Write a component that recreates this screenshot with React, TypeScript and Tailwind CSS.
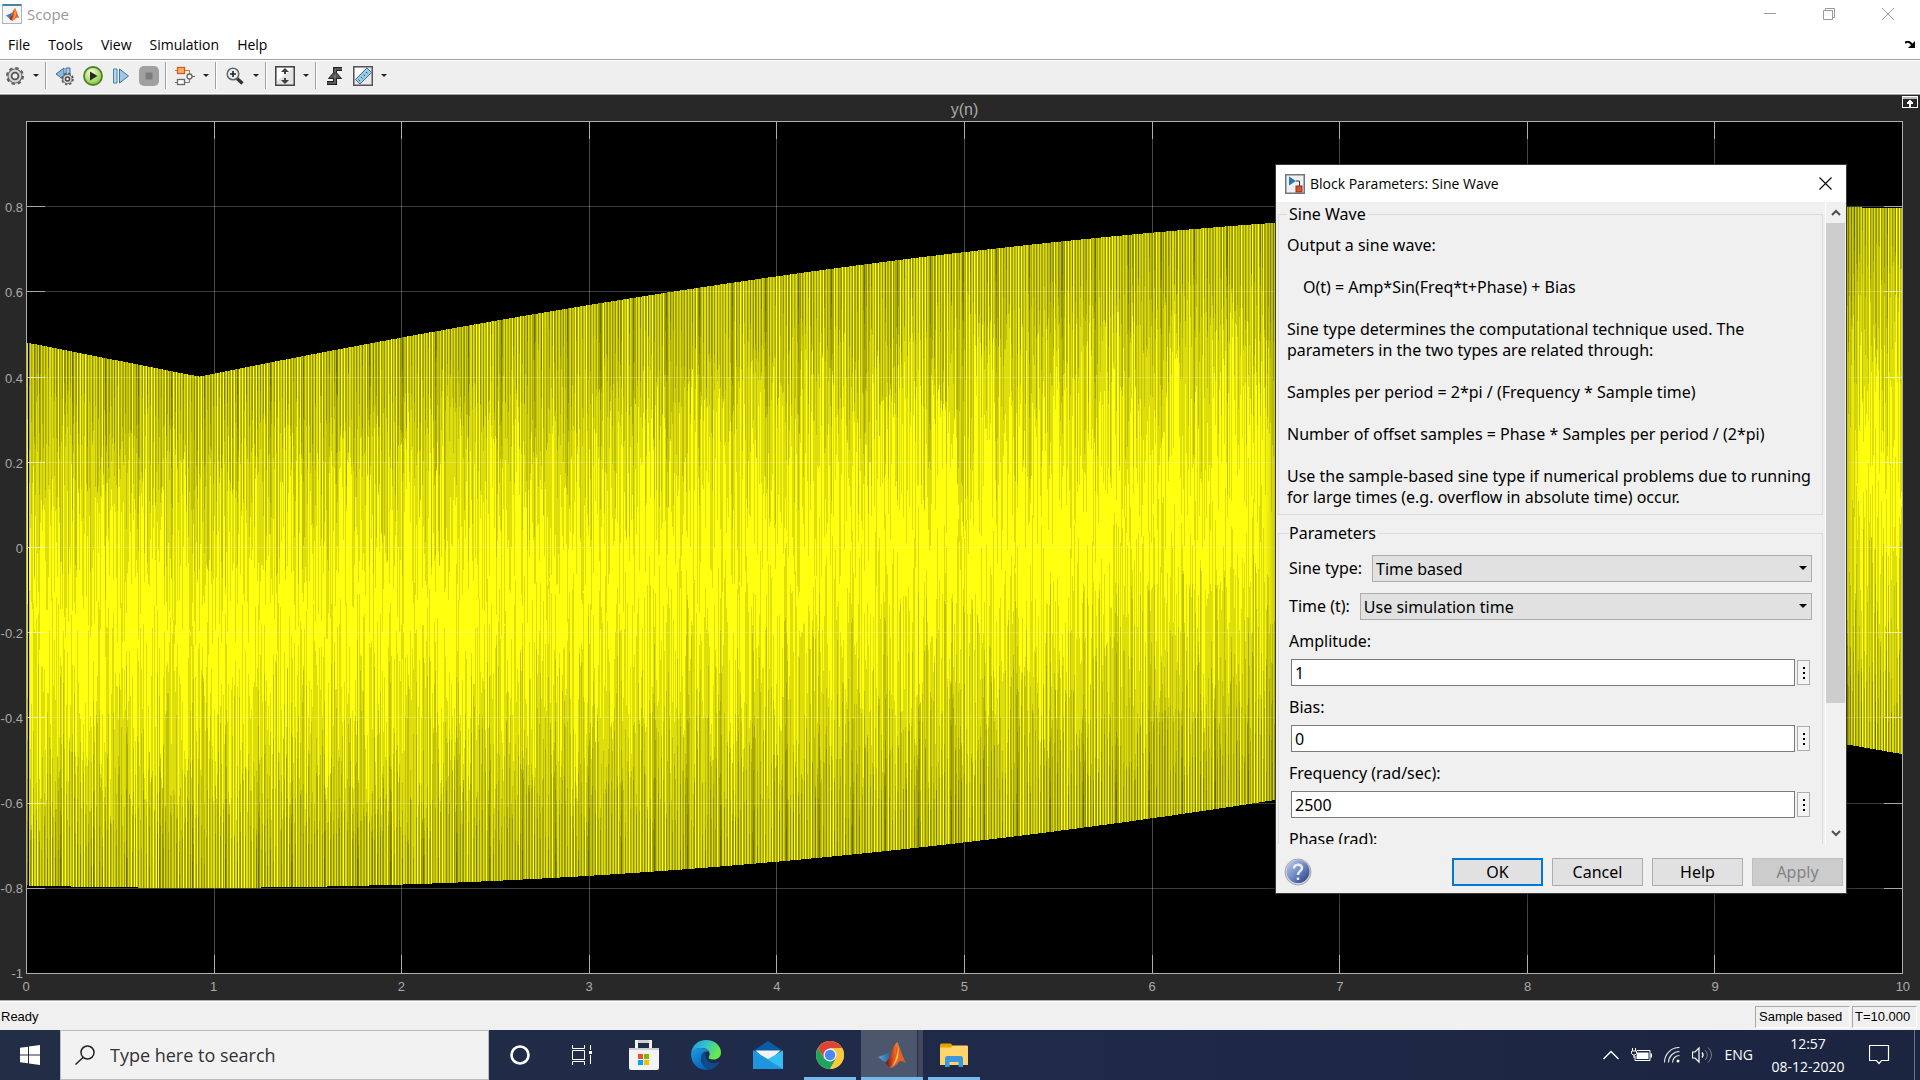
import type { ReactNode } from "react";

/* ---------- signal ---------- */

const PLOT_W = 1876;
const PLOT_H = 852;

const toY = (v: number) => Math.round(PLOT_H / 2 - v * (PLOT_H / 2));

const upperAt = (t: number) =>
  t < 0.92 ? 0.48 - (0.08 * t) / 0.92 : 0.8 * Math.sin(0.5236 + 0.128 * (t - 0.92));

const lowerAt = (t: number) =>
  t < 9.1 ? -0.8 * Math.cos(0.128 * (t - 0.92)) : -0.417 - 0.077 * (t - 9.1);

function makeRandom(seed: number) {
  let s = seed;
  return () => {
    s = (s * 1664525 + 1013904223) % 4294967296;
    return s / 4294967296;
  };
}

const REACH = [1, 0.78, 0.52, 0.34, 0.2, 0.1];

function buildSignal() {
  const rand = makeRandom(2500);
  const top: string[] = [];
  const bottom: string[] = [];
  const shades = ["", "", "", "", "", ""];
  for (let x = 1; x < PLOT_W; x++) {
    const t = (x / PLOT_W) * 10;
    const u = toY(upperAt(t));
    const l = toY(lowerAt(t));
    top.push(`${x},${u}`, `${x + 1},${u}`);
    bottom.unshift(`${x + 1},${l}`, `${x},${l}`);
    const half = (l - u) / 2;
    for (const side of [0, 1]) {
      const beat = Math.cos(2 * Math.PI * (x * 0.3633 + side * 0.4));
      const strong = x % 33 === (side ? 1 : 13);
      const count = strong ? 6 : Math.max(0, Math.min(5, Math.round(2.3 + 1.9 * beat + (rand() - 0.5) * 1.6)));
      for (let j = 0; j < count; j++) {
        const reach = REACH[j] * (strong ? 0.8 + rand() * 0.4 : 0.25 + rand() * 0.85);
        const depth = Math.round(half * reach);
        shades[j] += side ? `M${x} ${l}v${-depth}h1v${depth}z` : `M${x} ${u}v${depth}h1v${-depth}z`;
      }
    }
  }
  return { outline: [...top, ...bottom].join(" "), shades };
}

const signal = buildSignal();
const ticks = [1, 2, 3, 4, 5, 6, 7, 8, 9];
const xLabels = ["0", "1", "2", "3", "4", "5", "6", "7", "8", "9", "10"];
const yLabels = ["", "0.8", "0.6", "0.4", "0.2", "0", "-0.2", "-0.4", "-0.6", "-0.8", "-1"];

function Plot() {
  const gx = (i: number) => Math.round((PLOT_W * i) / 10);
  const gy = (i: number) => Math.round((PLOT_H * i) / 10);
  return (
    <svg
      className="block h-full w-full"
      viewBox={`1 1 ${PLOT_W - 1} ${PLOT_H - 1}`}
      preserveAspectRatio="none"
      shapeRendering="crispEdges"
      role="img"
      aria-label="y(n)"
    >
      <rect width={PLOT_W} height={PLOT_H} fill="#000" />
      {ticks.map((i) => (
        <path key={i} d={`M${gx(i)} 0h1v${PLOT_H}h-1z`} fill="#484848" />
      ))}
      <polygon points={signal.outline} fill="#ffff10" />
      {signal.shades.map((d, i) => (
        <path key={i} d={d} fill="#000" fillOpacity={0.13} />
      ))}
      <rect x="2" y="222" width="1" height="542" fill="#000" />
      {ticks.map((i) => (
        <g key={i} fill="#fff">
          <path d={`M0 ${gy(i)}h${PLOT_W}v1H0z`} fillOpacity={0.24} />
          <path d={`M0 ${gy(i)}h19v1H0z`} fillOpacity={0.55} />
          <path d={`M${PLOT_W} ${gy(i)}h-18v1h18z`} fillOpacity={0.55} />
          <path d={`M${gx(i)} 0h1v18h-1z`} fill="#afafaf" />
          <path d={`M${gx(i)} ${PLOT_H}h1v-18h-1z`} fill="#afafaf" />
        </g>
      ))}
    </svg>
  );
}

function ScopeArea() {
  return (
    <section className="relative flex min-h-0 flex-1 flex-col bg-[#282828] pr-[17px] font-['Liberation_Sans',Arial,sans-serif] text-[13px] text-[#aaaaaa]">
      <h1 className="h-[26px] pt-[5px] pl-[26px] text-center text-base leading-5">y(n)</h1>
      <button aria-label="Maximize axes" className="absolute top-px right-[2px]">
        <svg width="16" height="12" viewBox="0 0 16 12" shapeRendering="crispEdges">
          <path d="M.5.5h15v11H.5z" fill="#282828" stroke="#fff" />
          <path d="M1 1h14v2H1z" fill="#bbb" />
          <path d="M7 4h2v1h1v1h1v2H9v3H7V8H5V6h1V5h1z" fill="#fff" />
        </svg>
      </button>
      <div className="flex min-h-0 flex-1">
        <div className="flex w-[26px] flex-col justify-between pt-0.5 pr-[3px]">
          {yLabels.map((l, i) => (
            <span key={i} className="flex h-0 items-center justify-end">
              {l}
            </span>
          ))}
        </div>
        <div className="min-h-0 min-w-0 flex-1 border border-[#afafaf]">
          <Plot />
        </div>
      </div>
      <div className="flex h-[26px] justify-between pt-[3px] pl-[26px] leading-5">
        {xLabels.map((l) => (
          <span key={l} className="flex w-0 justify-center">
            {l}
          </span>
        ))}
      </div>
    </section>
  );
}

/* ---------- logos and icons ---------- */

function MatlabMark({ size }: { size: number }) {
  return (
    <svg width={size} height={size} viewBox="0 0 30 30">
      <defs>
        <linearGradient id="mlBlue" x1="0" y1="0" x2="1" y2="0">
          <stop offset="0" stopColor="#5ea7dd" />
          <stop offset="1" stopColor="#1f5d94" />
        </linearGradient>
        <linearGradient id="mlRed" x1="0" y1="0" x2="1" y2="0">
          <stop offset="0" stopColor="#5b0f0f" />
          <stop offset=".55" stopColor="#d3421c" />
          <stop offset="1" stopColor="#ee8a2a" />
        </linearGradient>
      </defs>
      <path d="M1 17l8-3c2-.5 4-2 5.500-4l-3 10-3 2.500z" fill="url(#mlBlue)" />
      <path d="M8.500 22.500c3-2 4-5 5.500-9C16 8 18 3 20.500 2c-1 6-1 13-3.500 19-2 3-3 5-5 6z" fill="url(#mlRed)" />
      <path d="M20.500 2c2.500 5 4.500 14 8.500 21-3-2-5-3-7-1-3 3-5 6-9.500 6 5-6 7-14 8-26z" fill="#e2622a" />
      <path d="M20.500 2c1 6 0 15-5 24 3-2 4-5 5.500-8 1-6 .6-12-.5-16z" fill="#ffc04a" />
    </svg>
  );
}

function FramedMatlab() {
  return (
    <span className="flex size-5 items-center justify-center rounded-[1px] border border-t-2 border-[#a9b6bf] border-t-[#4584a8] bg-[#f4f5f6]">
      <MatlabMark size={15} />
    </span>
  );
}

function Gear({ size = 20 }: { size?: number }) {
  return (
    <svg width={size} height={size} viewBox="0 0 20 20">
      <circle cx="10" cy="10" r="7.800" fill="none" stroke="#5f5f5f" strokeWidth="2.400" strokeDasharray="3.400 2.730" />
      <circle cx="10" cy="10" r="7" fill="#d6d6d6" stroke="#6b6b6b" strokeWidth="1.200" />
      <circle cx="10" cy="10" r="3.400" fill="#efefef" stroke="#555" strokeWidth="1.800" />
    </svg>
  );
}

const toolIcons = {
  stepBack: (
    <svg width="20" height="20" viewBox="0 0 20 20">
      <path d="M1 8l8-6v12z" fill="#8fb9dc" stroke="#3d6f9c" />
      <path d="M11 2h4v10h-4z" fill="#a8c9e4" stroke="#3d6f9c" />
      <circle cx="12.500" cy="13" r="5.500" fill="none" stroke="#555" strokeWidth="1.600" strokeDasharray="2.400 1.920" />
      <circle cx="12.500" cy="13" r="4.600" fill="#ddd" stroke="#666" />
      <circle cx="12.500" cy="13" r="2" fill="#fff" stroke="#444" strokeWidth="1.500" />
    </svg>
  ),
  run: (
    <svg width="20" height="20" viewBox="0 0 20 20">
      <defs>
        <radialGradient id="runFill" cx=".4" cy=".3" r=".8">
          <stop offset="0" stopColor="#f3fbd8" />
          <stop offset="1" stopColor="#7cc032" />
        </radialGradient>
      </defs>
      <circle cx="10" cy="10" r="9" fill="url(#runFill)" stroke="#4c8422" strokeWidth="1.800" />
      <path d="M7 5.500l7.500 4.500L7 14.500z" fill="#262c1e" />
    </svg>
  ),
  stepForward: (
    <svg width="18" height="18" viewBox="0 0 18 18">
      <path d="M1.500 2h3.500v14H1.500z" fill="#b8d4ea" stroke="#4a7eac" />
      <path d="M7.500 2l9 7-9 7z" fill="#9fc6e6" stroke="#3d74a6" />
    </svg>
  ),
  stop: (
    <svg width="20" height="20" viewBox="0 0 20 20">
      <rect width="20" height="20" rx="5" fill="#a0a0a0" />
      <rect x="6.500" y="6.500" width="7" height="7" fill="#7c7c7c" />
    </svg>
  ),
  blocks: (
    <svg width="20" height="20" viewBox="0 0 20 20">
      <path d="M0 4.500h14.500V8M0 16.500h14.500V13" fill="none" stroke="#777" />
      <path d="M0 4.500h14.500V8" fill="none" stroke="#d9772b" />
      <rect x="2.500" y="1.500" width="7" height="6" fill="#f9b26a" stroke="#cf5f1b" strokeWidth="1.300" />
      <rect x="2.500" y="13.500" width="7" height="5" fill="#fff" stroke="#666" strokeWidth="1.300" />
      <path d="M17 10.500h3" stroke="#666" />
      <circle cx="14.500" cy="10.500" r="2.500" fill="#fff" stroke="#666" strokeWidth="1.300" />
    </svg>
  ),
  zoom: (
    <svg width="20" height="20" viewBox="0 0 20 20">
      <path d="M11.500 12l6 5.500" stroke="#333" strokeWidth="3.400" />
      <circle cx="8" cy="8" r="5.800" fill="#e4eef4" stroke="#666" strokeWidth="1.500" />
      <path d="M5 8h6M8 5v6" stroke="#222" strokeWidth="1.600" />
    </svg>
  ),
  fit: (
    <svg width="20" height="20" viewBox="0 0 20 20">
      <rect x=".75" y=".75" width="18.500" height="18.500" fill="#e3e3e3" stroke="#444" strokeWidth="1.500" />
      <path d="M2 2h16L2 15z" fill="#fff" />
      <path d="M10 2l4 4h-3v2H9V6H6zM10 18l4-4h-3v-2H9v2H6z" fill="#3c3c3c" />
    </svg>
  ),
  trigger: (
    <svg width="18" height="20" viewBox="0 0 18 20">
      <path d="M1 17h8V3h7" fill="none" stroke="#222" strokeWidth="4" />
      <path d="M9 5l6.500 7.500h-13z" fill="#555" stroke="#222" />
      <path d="M1.500 17h7.500V9M9 6V3h7" fill="none" stroke="#888" strokeWidth="1.200" />
    </svg>
  ),
  ruler: (
    <svg width="20" height="20" viewBox="0 0 20 20">
      <rect x=".75" y=".75" width="18.500" height="18.500" fill="#e9e9e9" stroke="#555" strokeWidth="1.500" />
      <path d="M2 2h10L2 12z" fill="#fff" />
      <path d="M2.500 13.500L14 2l4.500 4.500L7 18z" fill="#9cc9e4" stroke="#3f7391" />
      <path d="M7 15l-1.500-1.500M9.500 12.500L8 11M12 10l-1.500-1.500M14.500 7.500L13 6" stroke="#2d5b78" />
    </svg>
  ),
};

function ToolButton({ label, children }: { label: string; children: ReactNode }) {
  return (
    <button aria-label={label} className="flex h-7 w-7 items-center justify-center">
      {children}
    </button>
  );
}

function CaretButton({ label }: { label: string }) {
  return (
    <button aria-label={label} className="flex h-7 w-3.5 items-center justify-center">
      <svg width="6" height="3" viewBox="0 0 6 3">
        <path d="M0 0h6L3 3z" fill="#222" />
      </svg>
    </button>
  );
}

function Separator() {
  return <span className="mr-1 ml-0.5 h-[27px] w-0.5 border-r border-l border-r-white border-l-[#a0a0a0]" />;
}

function Toolbar() {
  return (
    <div className="flex h-9 shrink-0 items-center border-t border-b border-[#a0a0a0] bg-[#efefef] pb-[3px] shadow-[inset_0_1px_0_#fff,inset_0_-1px_0_#fff]" role="toolbar">
      <div className="flex items-center pl-px">
        <ToolButton label="Configuration properties">
          <Gear />
        </ToolButton>
        <CaretButton label="Configuration menu" />
      </div>
      <Separator />
      <ToolButton label="Step back">{toolIcons.stepBack}</ToolButton>
      <ToolButton label="Run">{toolIcons.run}</ToolButton>
      <ToolButton label="Step forward">{toolIcons.stepForward}</ToolButton>
      <ToolButton label="Stop">{toolIcons.stop}</ToolButton>
      <Separator />
      <ToolButton label="Highlight block">{toolIcons.blocks}</ToolButton>
      <CaretButton label="Highlight menu" />
      <Separator />
      <ToolButton label="Zoom">{toolIcons.zoom}</ToolButton>
      <CaretButton label="Zoom menu" />
      <Separator />
      <ToolButton label="Scale axes">{toolIcons.fit}</ToolButton>
      <CaretButton label="Scale menu" />
      <Separator />
      <ToolButton label="Triggers">{toolIcons.trigger}</ToolButton>
      <ToolButton label="Measurements">{toolIcons.ruler}</ToolButton>
      <CaretButton label="Measurements menu" />
    </div>
  );
}

/* ---------- window chrome ---------- */

function TitleBar() {
  return (
    <header className="flex h-[30px] shrink-0 items-center justify-between bg-white pb-0.5 pl-0.5 font-['Open_Sans',sans-serif]">
      <div className="flex items-center gap-[5px]">
        <FramedMatlab />
        <span className="text-[15px] text-[#999999]">Scope</span>
      </div>
      <div className="flex pr-[3px] text-[#999999]">
        <button aria-label="Minimize" className="flex h-7 w-[59px] items-center justify-center">
          <svg width="12" height="12" viewBox="0 0 12 12"><path d="M0 5.500h12" stroke="currentColor" /></svg>
        </button>
        <button aria-label="Restore" className="flex h-7 w-[59px] items-center justify-center">
          <svg width="12" height="12" viewBox="0 0 12 12" fill="none" stroke="currentColor"><path d="M.5 2.500h9v9h-9zM2.500 2.500v-2h9v9h-2" /></svg>
        </button>
        <button aria-label="Close" className="flex h-7 w-[59px] items-center justify-center">
          <svg width="12" height="12" viewBox="0 0 12 12"><path d="M0 0l12 12M12 0L0 12" stroke="currentColor" /></svg>
        </button>
      </div>
    </header>
  );
}

function MenuBar() {
  return (
    <nav className="flex h-[29px] shrink-0 items-center justify-between bg-white pr-1 pl-2 font-['Open_Sans',sans-serif] text-sm text-black">
      <div className="flex gap-[18px]">
        {["File", "Tools", "View", "Simulation", "Help"].map((m) => (
          <button key={m}>{m}</button>
        ))}
      </div>
      <button aria-label="Dock">
        <svg width="11" height="8" viewBox="0 0 11 8">
          <path d="M0 2C2 0 4 0 7 3.500" fill="none" stroke="#000" strokeWidth="2" />
          <path d="M10 0v7H3z" fill="#000" />
        </svg>
      </button>
    </nav>
  );
}

function StatusBar() {
  return (
    <footer className="flex h-[30px] shrink-0 items-center justify-between border-t border-[#adadad] bg-[#f0f0f0] pr-[3px] pl-px font-['Liberation_Sans',Arial,sans-serif] text-[13px] text-black shadow-[inset_0_1px_0_#fff]">
      <span className="pt-0.5">Ready</span>
      <div className="flex gap-0.5 pt-[3px] leading-5">
        <span className="w-[95px] border border-white border-t-[#a8a8a8] border-l-[#a8a8a8] pl-[3px]">Sample based</span>
        <span className="w-[65px] border border-white border-t-[#a8a8a8] border-l-[#a8a8a8] pl-[2px]">T=10.000</span>
      </div>
    </footer>
  );
}

/* ---------- dialog ---------- */

function SelectRow({ id, label, value }: { id: string; label: string; value: string }) {
  return (
    <div className="flex items-center gap-[10px]">
      <label htmlFor={id}>{label}</label>
      <div className="relative flex-1">
        <select id={id} className="block h-[27px] w-full appearance-none border border-[#adadad] bg-[#e1e1e1] pl-[3px] leading-5">
          <option>{value}</option>
        </select>
        <svg className="pointer-events-none absolute top-[11px] right-[5px]" width="8" height="4" viewBox="0 0 8 4">
          <path d="M0 0h8L4 4z" fill="#000" />
        </svg>
      </div>
    </div>
  );
}

function FieldRow({ id, label, value }: { id: string; label: string; value: string }) {
  return (
    <div className="flex flex-col gap-[7px]">
      <label htmlFor={id} className="leading-[21px]">{label}</label>
      <div className="flex items-center gap-0.5 pr-0.5 pl-0.5">
        <input id={id} defaultValue={value} className="h-[27px] min-w-0 flex-1 border border-[#7a7a7a] bg-white px-[3px]" />
        <button aria-label={`${label} actions`} className="flex h-[25px] w-[13px] flex-col items-center justify-center gap-[3px] border border-[#adadad] bg-[#f4f4f4]">
          <span className="size-0.5 bg-black" />
          <span className="size-0.5 bg-black" />
          <span className="size-0.5 bg-black" />
        </button>
      </div>
    </div>
  );
}

const dialogButton = "h-7 w-[91px] border border-[#adadad] bg-[#e1e1e1]";

function BlockParameters() {
  return (
    <div
      role="dialog"
      aria-labelledby="dialog-title"
      className="absolute top-[165px] right-[74px] w-[570px] bg-[#f0f0f0] font-['Noto_Sans',Tahoma,sans-serif] text-base leading-[21px] text-black shadow-[0_0_0_1px_#3a3a3a,0_4px_14px_rgba(0,0,0,0.5)]"
    >
      <div className="flex h-[37px] items-center gap-[5px] bg-white pr-[14px] pl-[9px] font-['Open_Sans',sans-serif] text-sm">
        <svg width="20" height="20" viewBox="0 0 20 20">
          <rect x=".75" y=".75" width="18.500" height="18.500" fill="#eef0f1" stroke="#70777c" strokeWidth="1.500" />
          <path d="M4 2.500l7 4.500-7 4.500z" fill="#2778ac" />
          <path d="M11 7h3.500v5" fill="none" stroke="#333" />
          <rect x="11" y="12" width="6" height="6" fill="#d4562c" stroke="#96331a" />
        </svg>
        <span id="dialog-title" className="flex-1">Block Parameters: Sine Wave</span>
        <button aria-label="Close dialog">
          <svg width="13" height="13" viewBox="0 0 13 13"><path d="M.5.5l12 12M12.500.5l-12 12" stroke="#000" strokeWidth="1.100" /></svg>
        </button>
      </div>
      <div className="flex h-[642px]">
        <div className="min-w-0 flex-1 overflow-hidden pt-0.5 pr-[2px] pl-0.5">
          <fieldset className="border border-[#dcdcdc] px-2 pt-[10px] pb-[6px]">
            <legend className="px-[2px]">Sine Wave</legend>
            <div className="flex flex-col gap-[21px]">
              <p>Output a sine wave:</p>
              <p className="pl-4">O(t) = Amp*Sin(Freq*t+Phase) + Bias</p>
              <p>Sine type determines the computational technique used. The<br />parameters in the two types are related through:</p>
              <p>Samples per period = 2*pi / (Frequency * Sample time)</p>
              <p>Number of offset samples = Phase * Samples per period / (2*pi)</p>
              <p className="whitespace-nowrap">Use the sample-based sine type if numerical problems due to running<br />for large times (e.g. overflow in absolute time) occur.</p>
            </div>
          </fieldset>
          <fieldset className="mt-2 flex flex-col gap-[11px] border border-[#dcdcdc] px-[10px] pt-[11px] pb-3">
            <legend className="pr-[3px]">Parameters</legend>
            <SelectRow id="sine-type" label="Sine type:" value="Time based" />
            <SelectRow id="time-source" label="Time (t):" value="Use simulation time" />
            <FieldRow id="amplitude" label="Amplitude:" value="1" />
            <FieldRow id="bias" label="Bias:" value="0" />
            <FieldRow id="frequency" label="Frequency (rad/sec):" value="2500" />
            <FieldRow id="phase" label="Phase (rad):" value="0" />
          </fieldset>
        </div>
        <div className="flex w-[21px] flex-col border-l border-white pr-px">
          <button aria-label="Scroll up" className="flex h-[21px] items-center justify-center">
            <svg width="10" height="7" viewBox="0 0 10 7"><path d="M1 6l4-4 4 4" fill="none" stroke="#505050" strokeWidth="2" /></svg>
          </button>
          <div className="h-[480px] bg-[#cdcdcd]" />
          <div className="flex-1" />
          <button aria-label="Scroll down" className="flex h-[21px] items-center justify-center">
            <svg width="10" height="7" viewBox="0 0 10 7"><path d="M1 1l4 4 4-4" fill="none" stroke="#505050" strokeWidth="2" /></svg>
          </button>
        </div>
      </div>
      <div className="flex h-[49px] items-center justify-between pr-[3px] pb-[7px] pt-[14px] pl-2">
        <button aria-label="About this block">
          <svg width="28" height="28" viewBox="0 0 28 28">
            <defs>
              <linearGradient id="helpFill" x1="0" y1="0" x2="1" y2="1">
                <stop offset="0" stopColor="#c5d0ea" />
                <stop offset=".5" stopColor="#7189c4" />
                <stop offset="1" stopColor="#1d3a80" />
              </linearGradient>
            </defs>
            <circle cx="14" cy="14" r="13" fill="#d5d5d5" stroke="#a8a8a8" />
            <circle cx="14" cy="13.500" r="11.500" fill="url(#helpFill)" />
            <path d="M10 10.500c0-5 8-5 8-.5 0 3-4 3.500-4 7M14 19.500v2.500" fill="none" stroke="#e8edf7" strokeWidth="2.400" />
          </svg>
        </button>
        <div className="flex gap-[9px]">
          <button className="h-7 w-[91px] border-2 border-[#0078d7] bg-[#e1e1e1] leading-5">OK</button>
          <button className={dialogButton}>Cancel</button>
          <button className={dialogButton}>Help</button>
          <button disabled className="h-7 w-[91px] border border-[#bfbfbf] bg-[#cccccc] text-[#838383]">Apply</button>
        </div>
      </div>
    </div>
  );
}

/* ---------- taskbar ---------- */

function TaskButton({ label, state, children }: { label: string; state?: "open" | "active"; children: ReactNode }) {
  return (
    <button
      aria-label={label}
      className={
        state === "active"
          ? "relative flex h-full w-[62px] items-center justify-center bg-[#4c566c] shadow-[inset_-5px_0_0_#3f485d,inset_-6px_0_0_#2b3447]"
          : "relative flex h-full w-[62px] items-center justify-center"
      }
    >
      {children}
      {state === "open" && <span className="absolute right-[5px] bottom-0 left-[5px] h-[3px] bg-[#76b9ed]" />}
      {state === "active" && <span className="absolute right-0 bottom-0 left-0 h-[3px] bg-[#76b9ed]" />}
    </button>
  );
}

function Taskbar() {
  return (
    <div className="flex h-[50px] shrink-0 items-stretch bg-linear-to-r from-[#222e45] via-[#1f2a49] to-[#1b2540] font-['Open_Sans',sans-serif] text-white">
      <button aria-label="Start" className="flex w-[60px] items-center justify-center">
        <svg width="20" height="20" viewBox="0 0 20 20" fill="#fff">
          <path d="M0 2.800l8-1.100v7.800H0zM9 1.500L20 0v9.500H9zM0 10.500h8v7.800l-8-1.100zM9 10.500h11V20L9 18.500z" />
        </svg>
      </button>
      <label className="flex w-[429px] items-center gap-[15px] border border-[#bcbcbc] bg-[#f2f2f2] pl-3.5">
        <svg width="20" height="20" viewBox="0 0 20 20" fill="none" stroke="#222" strokeWidth="1.500">
          <circle cx="12.500" cy="7.500" r="6.500" />
          <path d="M8 12.500L.5 19.500" />
        </svg>
        <input aria-label="Search" placeholder="Type here to search" className="min-w-0 flex-1 bg-transparent text-lg outline-none placeholder:text-[#333333] placeholder:opacity-100" />
      </label>
      <TaskButton label="Cortana">
        <svg width="20" height="22" viewBox="0 0 20 22"><circle cx="10" cy="11" r="8.500" fill="none" stroke="#fff" strokeWidth="2.600" /></svg>
      </TaskButton>
      <TaskButton label="Task view">
        <svg width="20" height="20" viewBox="0 0 20 20" fill="none" stroke="#fff">
          <path d="M.5 0v3.500h12V0M.5 5.500h12v9H.5zM.5 20v-3.500h12V20M18.500 0v5M18.500 10v9" />
          <path d="M17 6h3v3h-3z" fill="#fff" stroke="none" />
        </svg>
      </TaskButton>
      <TaskButton label="Microsoft Store">
        <svg width="30" height="30" viewBox="0 0 30 30">
          <path d="M7.500 10V1.500h14V10" fill="none" stroke="#f4f4f4" strokeWidth="3" />
          <path d="M9 1.500h11" stroke="#ccd2cf" strokeWidth="3" />
          <path d="M0 8h30v20a2 2 0 01-2 2H2a2 2 0 01-2-2z" fill="#f3f3f3" />
          <path d="M0 8h30v2H0z" fill="#cfcfd0" />
          <path d="M9 14h5v5H9z" fill="#f25022" /><path d="M15 14h5v5h-5z" fill="#7fba00" />
          <path d="M9 20h5v5H9z" fill="#00a4ef" /><path d="M15 20h5v5h-5z" fill="#ffb900" />
        </svg>
      </TaskButton>
      <TaskButton label="Microsoft Edge">
        <svg width="30" height="30" viewBox="0 0 30 30">
          <defs>
            <linearGradient id="edgeTop" x1="0" y1="0" x2="1" y2=".4">
              <stop offset="0" stopColor="#1c96dc" /><stop offset=".5" stopColor="#35c1c9" /><stop offset="1" stopColor="#66eb4c" />
            </linearGradient>
            <linearGradient id="edgeBody" x1="0" y1="0" x2=".6" y2="1">
              <stop offset="0" stopColor="#1b9de2" /><stop offset="1" stopColor="#0a62b8" />
            </linearGradient>
          </defs>
          <path d="M0 14C1 5 7 0 15 0c9 0 15 6 15 12.500 0 4.500-3.500 7-7.500 7-3 0-5-1-5-2 0-.8 1.200-1.500 1.200-3.500C18.700 10.500 15 8 11 8 5.500 8 1 10.500 0 14z" fill="url(#edgeTop)" />
          <path d="M0 14c1-4 5-6 10-6 4 0 7 1.500 8.300 4C14 10 10 13.500 10 19c0 5.500 4.500 9 8.500 10.600C8 31.500 0 24 0 14z" fill="url(#edgeBody)" />
          <path d="M10 18c0-3 1.600-6 5-6.500-1.500 3-.5 11.500 8 11.500 2 0 3.500-.6 4.500-1.100.5-.2.900.2.600.700C25.500 27 21 30 17.500 29.800 13.500 28.500 10 24 10 18z" fill="#114a8b" />
        </svg>
      </TaskButton>
      <TaskButton label="Mail">
        <svg width="30" height="28" viewBox="0 0 30 28">
          <path d="M0 10L15 0l15 10v4H0z" fill="#0a5ba8" />
          <path d="M2.500 9.500h25L15 21z" fill="#f2f2f2" />
          <path d="M0 9.500L15 18 30 9.500V28H0z" fill="#36bdf2" />
          <path d="M0 9.500L30 28H0z" fill="#1f95de" />
        </svg>
      </TaskButton>
      <TaskButton label="Google Chrome" state="open">
        <svg width="28" height="28" viewBox="0 0 28 28">
          <circle cx="14" cy="14" r="14" fill="#fbc93d" />
          <path d="M14 7h12.100a14 14 0 00-24.200 0L8 17z" fill="#dc4437" />
          <path d="M1.900 7L8 17.500 20 17.500 14 28A14 14 0 011.900 7z" fill="#1da362" />
          <path d="M14 7h12.100A14 14 0 0114 28l6-10.500z" fill="#fbc93d" />
          <circle cx="14" cy="14" r="6.500" fill="#f1f1f1" />
          <circle cx="14" cy="14" r="5.200" fill="#4a89f3" />
        </svg>
      </TaskButton>
      <TaskButton label="MATLAB" state="active">
        <MatlabMark size={30} />
      </TaskButton>
      <TaskButton label="File Explorer" state="open">
        <svg width="28" height="24" viewBox="0 0 28 24">
          <path d="M0 2a1.500 1.500 0 011.500-1.500h9l3 2.500V8H0z" fill="#e2a200" />
          <path d="M0 4.500h11l2.500-2H27a1 1 0 011 1V22H0z" fill="#ffd56a" />
          <path d="M5 24v-8.500A2.500 2.500 0 017.500 13h13a2.500 2.500 0 012.500 2.500V24h-4.500v-5h-9v5z" fill="#3c97dd" />
        </svg>
      </TaskButton>
      <div className="ml-auto flex items-center">
        <button aria-label="Show hidden icons" className="mr-3">
          <svg width="16" height="10" viewBox="0 0 16 10"><path d="M.5 9L8 1.500 15.500 9" fill="none" stroke="#fff" strokeWidth="1.400" /></svg>
        </button>
        <svg className="mr-3" width="21" height="14" viewBox="0 0 21 14">
          <path d="M6 2.500h13v10H4V8" fill="none" stroke="#fff" />
          <path d="M6 4.500h11.500V11h-12V8zM19.500 5.500H21v4h-1.500z" fill="#fff" />
          <path d="M1.500 0v3M4.500 0v3M.5 3h5v2.500L4 7H2L.5 5.500zM3 7v3" fill="none" stroke="#fff" />
        </svg>
        <svg className="mr-3" width="16" height="16" viewBox="0 0 16 16" fill="none" stroke="#fff">
          <circle cx="14" cy="14" r="1.500" fill="#fff" stroke="none" />
          <path d="M.5 15.500C.5 7 7 .5 15.500.5M4.500 15.500c0-6 5-11 11-11M8.500 15.500c0-4 3-7 7-7" strokeWidth="1.200" opacity=".85" />
        </svg>
        <svg className="mr-3" width="21" height="18" viewBox="0 0 21 18" fill="none" stroke="#fff">
          <path d="M.5 6v6H3l4 4V2L3 6z" strokeWidth="1.200" />
          <path d="M10 6.500c1.300 1.500 1.300 3.500 0 5" strokeWidth="1.200" />
          <path d="M13 4c3 3 3 7 0 10M16 1.500c4.500 4.500 4.500 10.500 0 15" opacity=".4" />
        </svg>
        <button className="text-sm">ENG</button>
        <button className="ml-4 w-[78px] text-center text-sm leading-[23px]">
          12:57<br />08-12-2020
        </button>
        <button aria-label="Notifications" className="ml-[22px]">
          <svg width="21" height="20" viewBox="0 0 21 20"><path d="M.5.5h19v15h-7l-2.500 3-2.500-3h-7z" fill="none" stroke="#fff" strokeWidth="1.200" /></svg>
        </button>
        <span className="ml-6 h-[50px] w-1.5 border-l border-[#6a7284]" />
      </div>
    </div>
  );
}

export default function App() {
  return (
    <main className="relative flex h-screen flex-col overflow-hidden bg-white">
      <TitleBar />
      <MenuBar />
      <Toolbar />
      <ScopeArea />
      <StatusBar />
      <Taskbar />
      <BlockParameters />
    </main>
  );
}
